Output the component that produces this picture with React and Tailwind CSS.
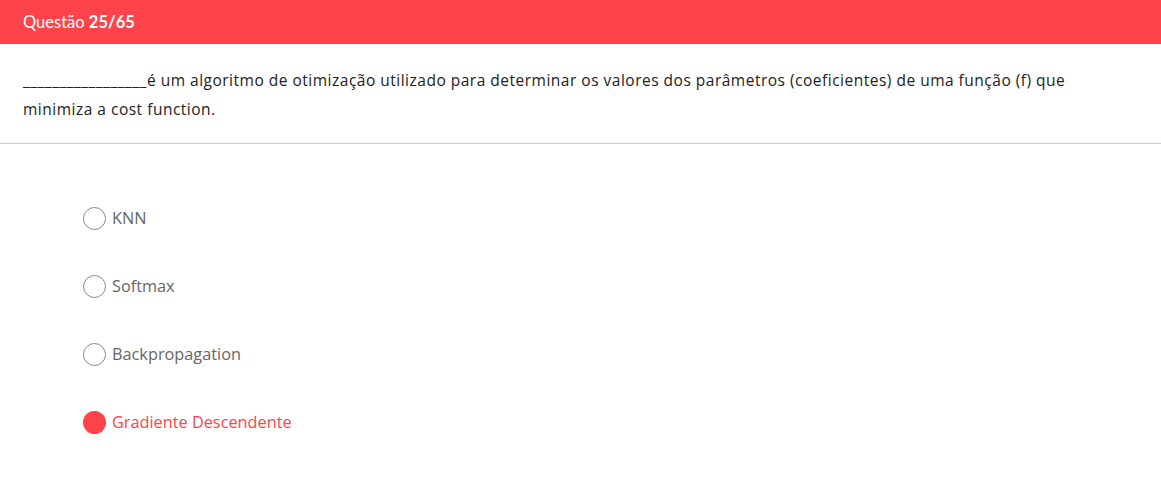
import { useState } from 'react';

const options = ['KNN', 'Softmax', 'Backpropagation', 'Gradiente Descendente'];

export default function App() {
  const [selected, setSelected] = useState(3);

  return (
    <div className="min-h-screen bg-white" style={{ fontFamily: '"Open Sans", "Noto Sans", sans-serif' }}>
      <div className="h-[44px] bg-[#ff434a] flex items-center px-[23px] text-white text-[16.5px]" style={{ fontFamily: 'Lato, sans-serif' }}>
        Questão&nbsp;<span className="font-bold">25/65</span>
      </div>

      <div className="px-[23px] pt-[22px] pb-[19px] border-b border-[#cfcfcf] text-[15.5px] tracking-[0.5px] leading-[29px] text-[#222]">
        _________________é um algoritmo de otimização utilizado para determinar os valores dos parâmetros (coeficientes) de uma função (f) que
        minimiza a cost function.
      </div>

      <div className="pl-[83px] pt-[63px] flex flex-col gap-[45px]">
        {options.map((opt, i) => (
          <button
            key={opt}
            onClick={() => setSelected(i)}
            className="flex items-center gap-[6px] h-[23px] text-left"
          >
            {selected === i ? (
              <span className="w-[23px] h-[23px] rounded-full bg-[#ff434a]" />
            ) : (
              <span className="w-[23px] h-[23px] rounded-full border border-[#888]" />
            )}
            <span className={`text-[16.3px] ${selected === i ? 'text-[#ff434a]' : 'text-[#666]'}`}>{opt}</span>
          </button>
        ))}
      </div>
    </div>
  );
}
